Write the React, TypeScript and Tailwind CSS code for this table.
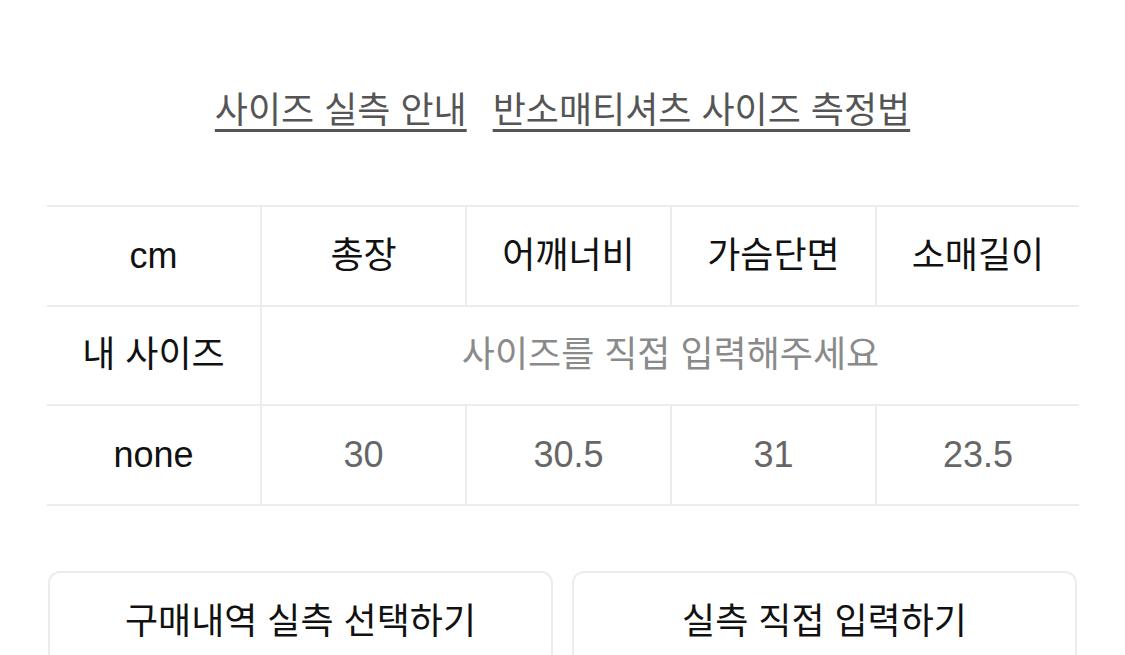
const font = { fontFamily: '"Liberation Sans", "Noto Sans CJK KR", sans-serif' };

const headers = ['총장', '어깨너비', '가슴단면', '소매길이'];
const values = ['30', '30.5', '31', '23.5'];

export default function App() {
  return (
    <div className="w-[1125px] h-[655px] bg-white overflow-hidden" style={font}>
      <div className="flex justify-center gap-[26px] pt-[87px] text-[36px] leading-[48px] text-[#555]">
        <a className="underline decoration-[3px] underline-offset-[6px] decoration-[#555]">사이즈 실측 안내</a>
        <a className="underline decoration-[3px] underline-offset-[6px] decoration-[#555]">반소매티셔츠 사이즈 측정법</a>
      </div>

      <div className="mx-[47px] mt-[70px] w-[1032px] border-t-2 border-[#ececec] grid grid-cols-[213px_205px_205px_205px_204px] text-[36px]">
        <div className="h-[99.5px] flex items-center justify-center text-[#111] border-b-2 border-[#ececec]">cm</div>
        {headers.map((h) => (
          <div key={h} className="h-[99.5px] flex items-center justify-center text-[#111] border-b-2 border-l-2 border-[#ececec]">
            {h}
          </div>
        ))}

        <div className="h-[99.5px] flex items-center justify-center text-[#111] border-b-2 border-[#ececec]">내 사이즈</div>
        <div className="col-span-4 h-[99.5px] flex items-center justify-center text-[#8a8a8a] border-b-2 border-l-2 border-[#ececec]">
          사이즈를 직접 입력해주세요
        </div>

        <div className="h-[99.5px] flex items-center justify-center text-[#111] border-b-2 border-[#ececec]">none</div>
        {values.map((v) => (
          <div key={v} className="h-[99.5px] flex items-center justify-center text-[#666] border-b-2 border-l-2 border-[#ececec]">
            {v}
          </div>
        ))}
      </div>

      <div className="mx-[48px] mt-[65px] flex gap-[19px]">
        <button className="w-[506px] h-[110px] rounded-[12px] border-2 border-[#ececec] text-[36px] text-[#111] flex justify-center pt-[22px]">
          구매내역 실측 선택하기
        </button>
        <button className="w-[506px] h-[110px] rounded-[12px] border-2 border-[#ececec] text-[36px] text-[#111] flex justify-center pt-[22px]">
          실측 직접 입력하기
        </button>
      </div>
    </div>
  );
}
